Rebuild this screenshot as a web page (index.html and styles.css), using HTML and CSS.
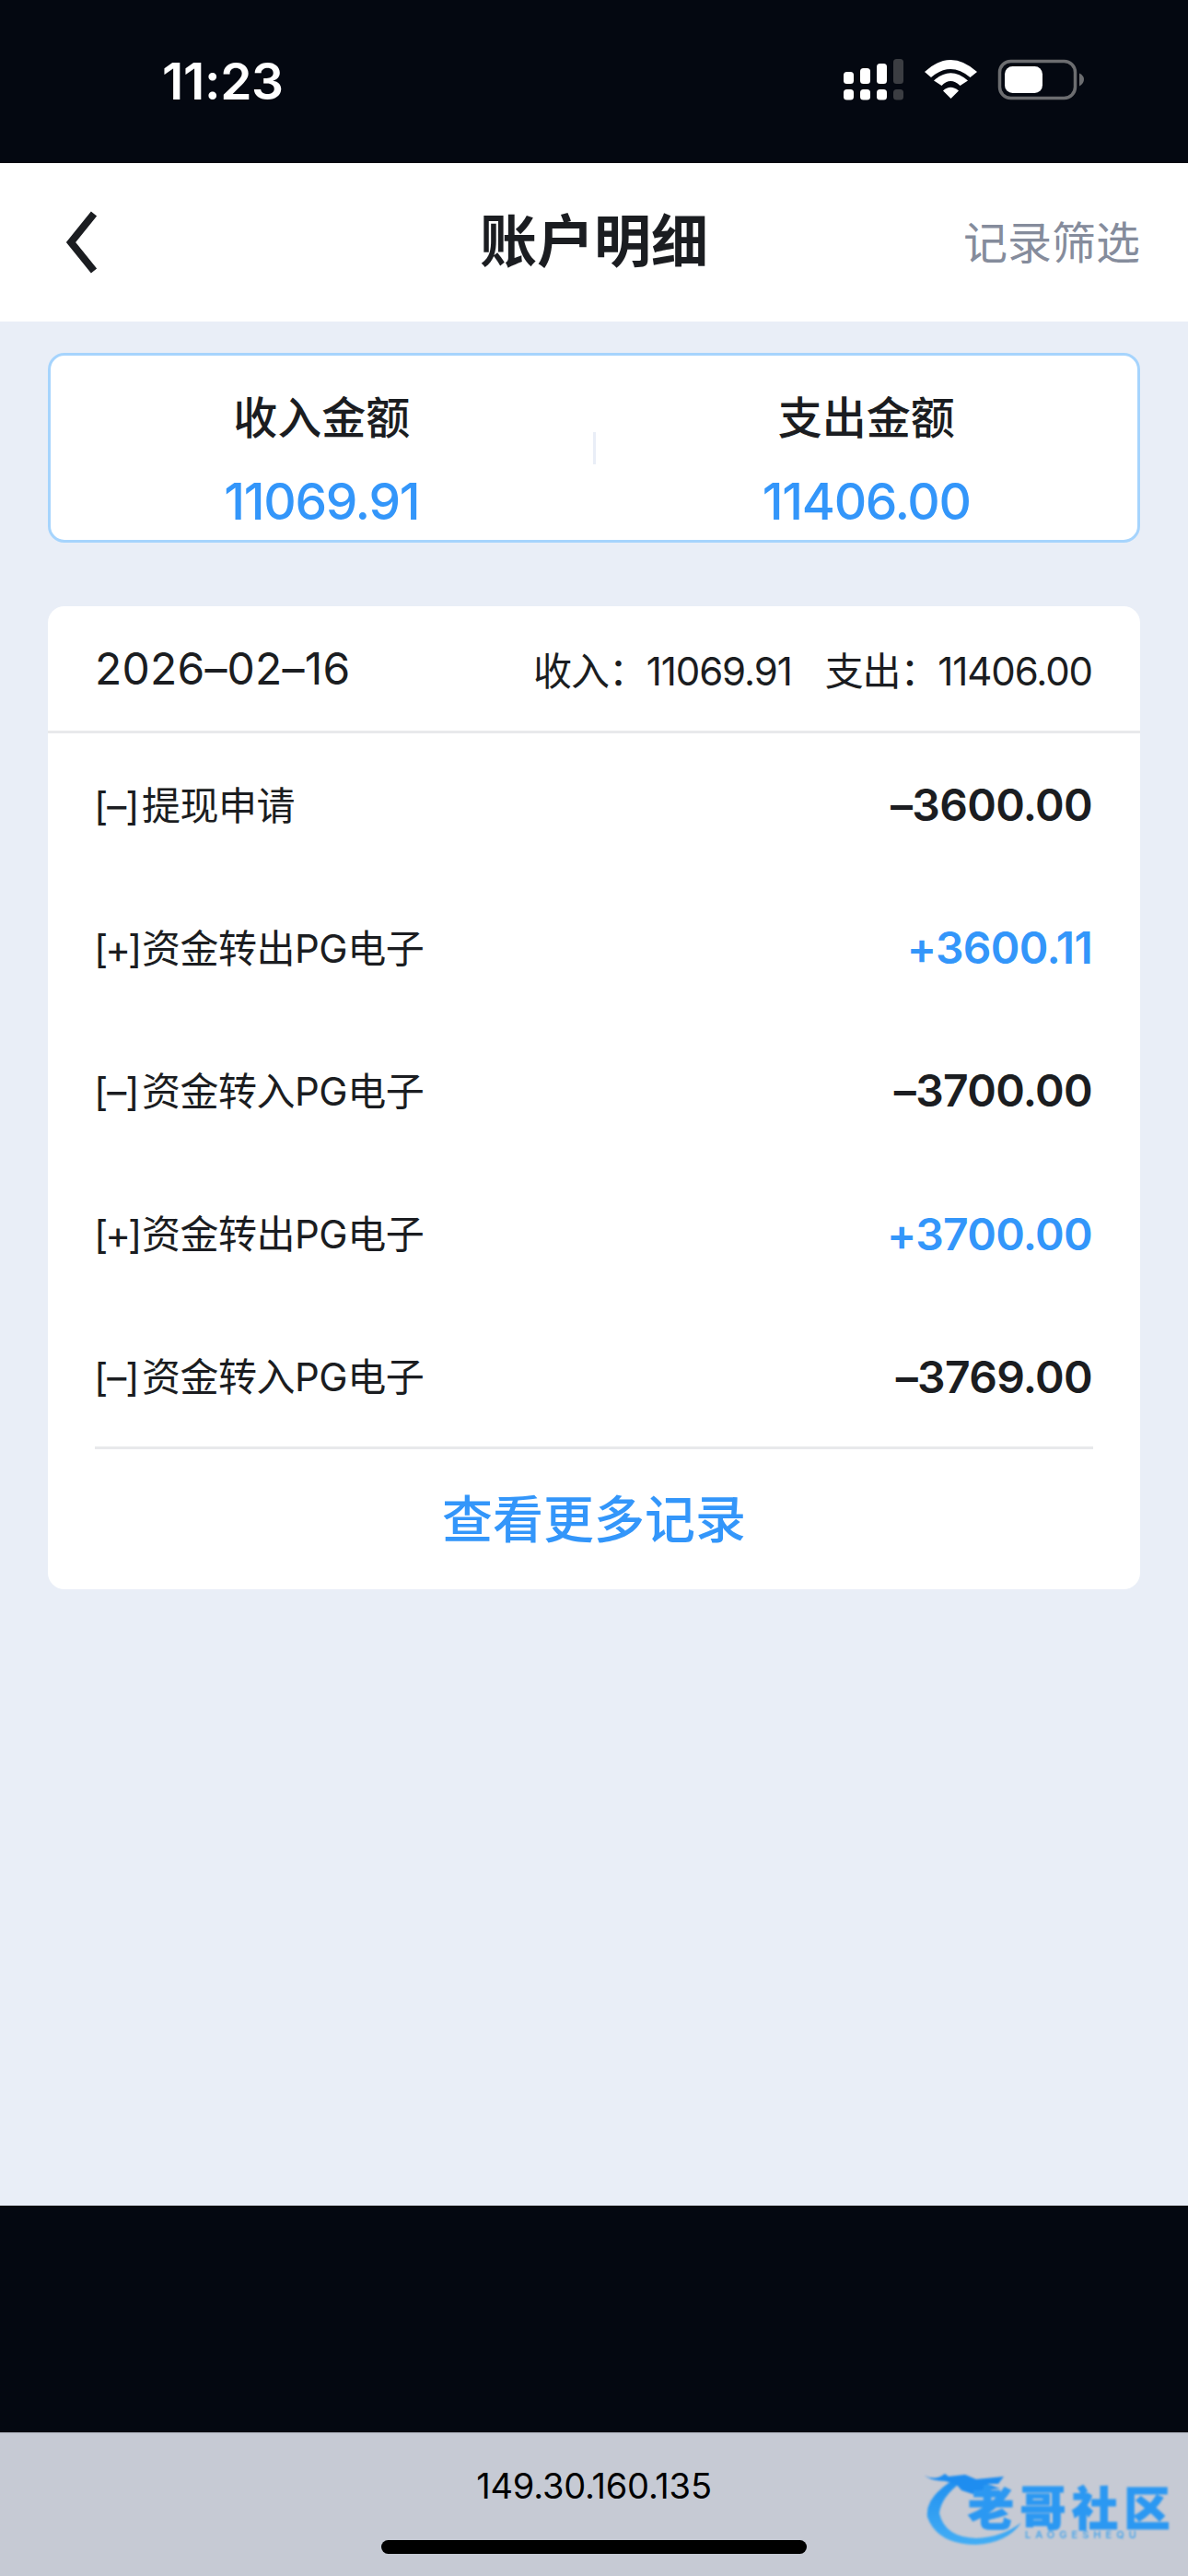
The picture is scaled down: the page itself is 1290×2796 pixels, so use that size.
FILE: index.html
```html
<!DOCTYPE html>
<html lang="zh-CN">
<head>
<meta charset="utf-8">
<title>账户明细</title>
<link rel="stylesheet" href="styles.css">
</head>
<body>
<div class="phone">
  <div class="status">
    <span class="time">11:23</span>
    <svg class="status-icons" width="320" height="100" viewBox="0 0 320 100">
      <g fill="#fff">
        <rect x="36" y="38" width="11" height="13" rx="3.5"/><rect x="54" y="34" width="11" height="17" rx="3.5"/><rect x="72" y="29" width="11" height="22" rx="3.5"/>
        <rect x="36" y="57" width="11" height="11.500" rx="3.5"/><rect x="54" y="57" width="11" height="11.500" rx="3.5"/><rect x="72" y="57" width="11" height="11.500" rx="3.5"/>
      </g>
      <g fill="#3b3d42">
        <rect x="90" y="24" width="11" height="27" rx="3.5"/><rect x="90" y="57" width="11" height="11.500" rx="3.500"/>
      </g>
      <g fill="#fff">
        <path d="M124 38Q152 12 181 38L173.500 44Q152 26 131 44Z"/>
        <path d="M134 47.500Q152 31 171 47.500L162.500 53Q152 43 142.500 53Z"/>
        <path d="M144 58.500Q152 51 161 58.500L152.500 67Z"/>
      </g>
      <rect x="205.500" y="26.500" width="82" height="40" rx="12" fill="none" stroke="#6c6d70" stroke-width="3.500"/>
      <rect x="211" y="32" width="41" height="29" rx="8.500" fill="#fff"/>
      <path d="M292 39.500Q297 42 297 46Q297 51 292 53.500Z" fill="#6c6d70"/>
    </svg>
  </div>

  <header class="nav">
    <svg class="back" width="44" height="72" viewBox="0 0 44 72"><path d="M36 5L11 36L36 67" fill="none" stroke="#1b1d21" stroke-width="8"/></svg>
    <h1 class="nav-title">账户明细</h1>
    <span class="nav-action">记录筛选</span>
  </header>

  <main class="content">
    <section class="summary">
      <div class="summary-col">
        <div class="summary-label">收入金额</div>
        <div class="summary-value">11069.91</div>
      </div>
      <div class="summary-sep"></div>
      <div class="summary-col">
        <div class="summary-label">支出金额</div>
        <div class="summary-value">11406.00</div>
      </div>
    </section>

    <section class="records">
      <div class="records-head">
        <span class="date">2026–02–16</span>
        <div class="totals">
          <span>收入：11069.91</span>
          <span>支出：11406.00</span>
        </div>
      </div>
      <ul class="rows">
        <li class="row"><span class="row-label"><span class="tag">[–]</span>提现申请</span><span class="amount">–3600.00</span></li>
        <li class="row"><span class="row-label"><span class="tag tag-plus">[+]</span>资金转出PG电子</span><span class="amount plus">+3600.11</span></li>
        <li class="row"><span class="row-label"><span class="tag">[–]</span>资金转入PG电子</span><span class="amount">–3700.00</span></li>
        <li class="row"><span class="row-label"><span class="tag tag-plus">[+]</span>资金转出PG电子</span><span class="amount plus">+3700.00</span></li>
        <li class="row"><span class="row-label"><span class="tag">[–]</span>资金转入PG电子</span><span class="amount">–3769.00</span></li>
      </ul>
      <div class="more">查看更多记录</div>
    </section>
  </main>

  <div class="dark-band"></div>

  <footer class="browser">
    <div class="ip">149.30.160.135</div>
    <div class="home"></div>
    <div class="logo">
      <svg class="logo-art" width="330" height="136" viewBox="0 0 330 136">
        <defs>
          <linearGradient id="sw" x1="0" y1="0" x2="0" y2="1"><stop offset="0" stop-color="#1f8ff0"/><stop offset="1" stop-color="#43aef5"/></linearGradient>
        </defs>
        <path d="M78 30Q44 50 47 72Q58 102 100 102Q134 100 149 78Q128 94 100 95Q66 94 60 68Q62 50 84 34Z" fill="url(#sw)"/>
        <path d="M44 27Q56 33 66 25L70 28L88 26L100 31L130 28L124 36L112 36L126 41L106 43L96 47L84 43L78 36L66 33Q52 33 44 27Z" fill="#1e8df0"/>
      </svg>
      <span class="logo-name">老哥社区</span>
      <span class="logo-sub">LAOGESHEQU</span>
    </div>
  </footer>
</div>
</body>
</html>
```
FILE: styles.css
```css
* { box-sizing: border-box; }
html, body { margin: 0; padding: 0; }
body {
  font-family: Inter, "Noto Sans CJK SC", "Liberation Sans", sans-serif;
  color: #1b1d21;
}
.phone {
  width: 1290px;
  height: 2796px;
  display: flex;
  flex-direction: column;
  background: #e9eef7;
  overflow: hidden;
}
.status {
  height: 177px;
  flex: none;
  background: #040811;
  position: relative;
  display: flex;
  justify-content: space-between;
}
.time {
  margin: 58px 0 0 176px;
  font-size: 55px;
  line-height: 60px;
  font-weight: 600;
  color: #fff;
  letter-spacing: -0.300px;
}
.status-icons { position: absolute; left: 880px; top: 40px; }

.nav {
  height: 172px;
  flex: none;
  background: #fff;
  position: relative;
  display: flex;
  align-items: center;
  justify-content: center;
}
.back { position: absolute; left: 66px; top: 50px; }
.nav-title {
  margin: 0;
  font-size: 62px;
  line-height: 72px;
  font-weight: 700;
}
.nav-action {
  position: absolute;
  right: 52px;
  top: 58px;
  font-size: 48px;
  line-height: 58px;
  color: #858c9c;
}

.content {
  flex: 1;
  padding: 34px 52px 0 52px;
  display: flex;
  flex-direction: column;
  gap: 69px;
}
.summary {
  height: 206px;
  background: #fff;
  border: 3px solid #a6d4fd;
  border-radius: 18px;
  display: grid;
  grid-template-columns: 1fr 3px 1fr;
  align-items: center;
}
.summary-col {
  text-align: center;
  display: flex;
  flex-direction: column;
  gap: 32px;
  padding-top: 25px;
}
.summary-label {
  font-size: 48px;
  line-height: 58px;
  font-weight: 500;
}
.summary-value {
  font-size: 55px;
  line-height: 58px;
  font-weight: 500;
  color: #3396fa;
  letter-spacing: -1.300px;
}
.summary-sep {
  height: 35px;
  background: #e9eef7;
}

.records {
  height: 1067px;
  background: #fff;
  border-radius: 18px;
  display: flex;
  flex-direction: column;
}
.records-head {
  height: 138px;
  flex: none;
  padding: 0 51px;
  border-bottom: 3px solid #e8e9eb;
  display: flex;
  justify-content: space-between;
  align-items: center;
}
.date { font-size: 48px; letter-spacing: 0.200px; }
.totals {
  display: flex;
  gap: 36px;
  font-size: 42px;
  letter-spacing: -1.100px;
  margin-right: 1px;
}
.rows {
  list-style: none;
  margin: 0;
  padding: 0 51px;
}
.row {
  height: 155.200px;
  display: flex;
  justify-content: space-between;
  align-items: center;
}
.row-label {
  font-size: 42px;
  line-height: 50px;
  margin: 2px 0 0 -1px;
  letter-spacing: -0.500px;
}
.tag {
  display: inline-block;
  width: 52px;
  white-space: nowrap;
  letter-spacing: -1px;
}
.tag-plus { letter-spacing: -3px; }
.amount {
  font-size: 48px;
  line-height: 58px;
  font-weight: 600;
  letter-spacing: -0.700px;
  margin: 1px 1px 0 0;
}
.amount.plus { color: #3396fa; }
.more {
  margin: -2px 51px 0;
  padding-bottom: 8px;
  flex: 1;
  border-top: 3px solid #e8e9eb;
  display: flex;
  align-items: center;
  justify-content: center;
  font-size: 55px;
  font-weight: 500;
  color: #3396fa;
}
.dark-band {
  height: 246px;
  flex: none;
  background: #040811;
}
.browser {
  height: 156px;
  flex: none;
  background: #c6cad4;
  border-top: 1px solid #a9adb6;
  position: relative;
  display: flex;
  flex-direction: column;
  align-items: center;
}
.ip {
  margin-top: 35px;
  font-size: 38px;
  line-height: 44px;
  color: #000;
  letter-spacing: -0.200px;
}
.home {
  margin-top: 37px;
  width: 462px;
  height: 15px;
  border-radius: 8px;
  background: #000;
}
.logo {
  position: absolute;
  left: 960px;
  top: 19px;
  width: 330px;
  height: 136px;
  filter: blur(0.800px);
}
.logo-art { position: absolute; left: 0; top: 0; }
.logo-name {
  position: absolute;
  left: 91px;
  top: 34px;
  font-size: 50px;
  line-height: 58px;
  font-weight: 900;
  letter-spacing: 6.500px;
  white-space: nowrap;
  color: #2b98f2;
  -webkit-text-stroke: 1px #2b98f2;
}
.logo-sub {
  position: absolute;
  left: 153px;
  top: 84px;
  font-size: 11px;
  line-height: 14px;
  font-weight: 600;
  letter-spacing: 5px;
  color: #4ba6ea;
  white-space: nowrap;
}
```
